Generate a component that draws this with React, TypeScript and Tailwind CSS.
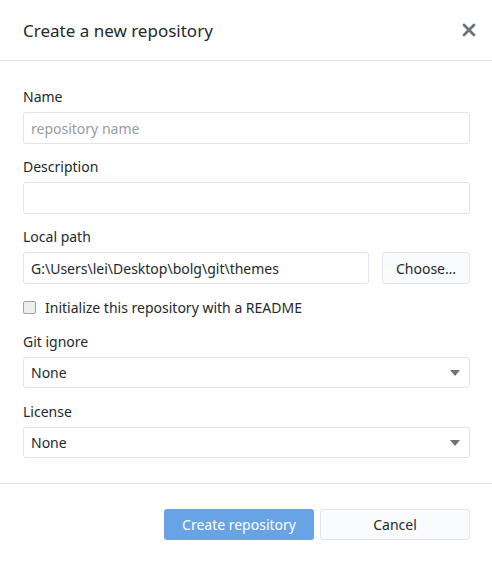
import React from "react";

const font = { fontFamily: '"Noto Sans", "Open Sans", sans-serif' };

function Label({ children }: { children: React.ReactNode }) {
  return <div className="h-5 text-[14px] leading-5 text-[#24292e]">{children}</div>;
}

function Select({ value }: { value: string }) {
  return (
    <div className="mt-[5px] flex h-[31px] items-center justify-between rounded-[3px] border border-[#e1e4e8] bg-white pl-[7px] pr-[9px] text-[14px] text-[#24292e]">
      <span>{value}</span>
      <svg width="10" height="6" viewBox="0 0 10 6">
        <path d="M0 0h10L5 6z" fill="#6a737d" />
      </svg>
    </div>
  );
}

export default function App() {
  return (
    <div className="h-[562px] w-[492px] bg-white" style={font}>
      <header className="flex h-[61px] items-center justify-between border-b border-[#e1e4e8] pl-[23px] pr-[13px]">
        <h1 className="pt-[1px] text-[17px] font-normal text-[#24292e]">Create a new repository</h1>
        <button className="flex h-5 w-5 items-center justify-center">
          <svg width="14" height="14" viewBox="0 0 14 14">
            <path d="M2 2l10 10M12 2L2 12" stroke="#6a737d" strokeWidth="2.8" strokeLinecap="round" />
          </svg>
        </button>
      </header>

      <div className="pl-[23px] pr-[22px] pt-[26px]">
        <Label>Name</Label>
        <input
          placeholder="repository name"
          className="mt-[5px] block h-[32px] w-full rounded-[3px] border border-[#e1e4e8] px-[7px] text-[14px] text-[#24292e] outline-none placeholder:text-[#959da5]"
        />

        <div className="mt-[13px]">
          <Label>Description</Label>
          <input className="mt-[5px] block h-[32px] w-full rounded-[3px] border border-[#e1e4e8] px-[7px] text-[14px] outline-none" />
        </div>

        <div className="mt-[13px]">
          <Label>Local path</Label>
          <div className="mt-[5px] flex gap-[13px]">
            <input
              defaultValue="G:\Users\lei\Desktop\bolg\git\themes"
              className="block h-[32px] min-w-0 flex-1 rounded-[3px] border border-[#e1e4e8] px-[7px] text-[14px] text-[#24292e] outline-none"
            />
            <button className="h-[32px] w-[88px] rounded-[3px] border border-[#e1e4e8] bg-[#fafbfc] text-[14px] text-[#24292e]">
              Choose…
            </button>
          </div>
        </div>

        <label className="mt-[13px] flex h-5 items-center gap-[9px] text-[14px] text-[#24292e]">
          <span className="h-[13px] w-[13px] rounded-[2px] border border-[#a0a4a8] bg-[#eceef0]" />
          Initialize this repository with a README
        </label>

        <div className="mt-[15px]">
          <Label>Git ignore</Label>
          <Select value="None" />
        </div>

        <div className="mt-[14px]">
          <Label>License</Label>
          <Select value="None" />
        </div>
      </div>

      <footer className="mt-[25px] flex justify-end gap-[6px] border-t border-[#e1e4e8] pl-[23px] pr-[22px] pt-[25px]">
        <button className="h-[31px] w-[150px] rounded-[3px] bg-[#68a3e6] text-[14px] text-white">Create repository</button>
        <button className="h-[31px] w-[150px] rounded-[3px] border border-[#e1e4e8] bg-[#fafbfc] text-[14px] text-[#24292e]">
          Cancel
        </button>
      </footer>
    </div>
  );
}
